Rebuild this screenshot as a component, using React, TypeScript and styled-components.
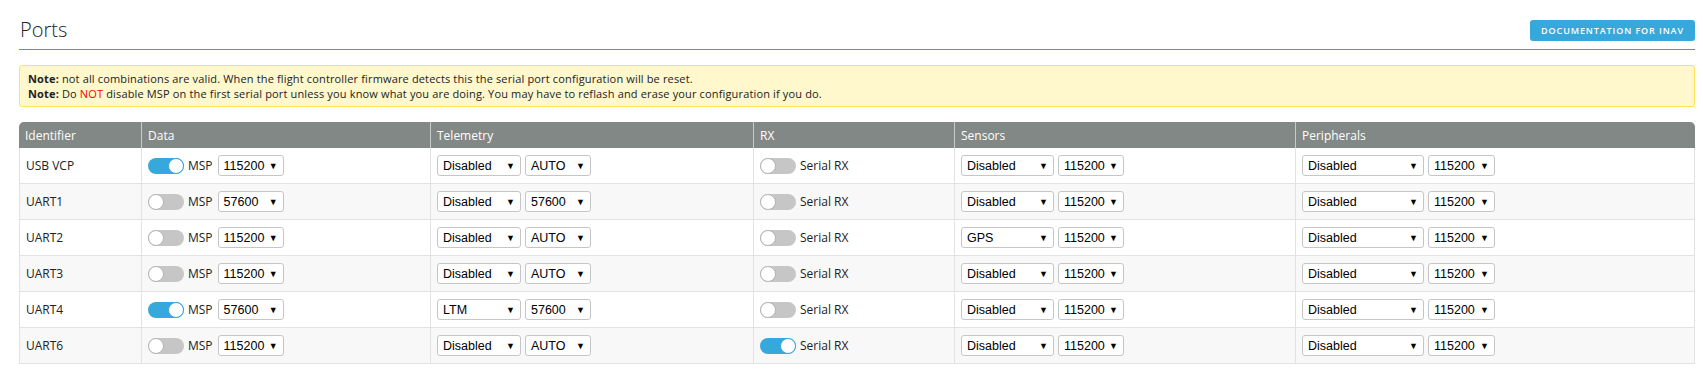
import React from 'react'
import styled, { createGlobalStyle } from 'styled-components'

const GlobalStyle = createGlobalStyle`
  body {
    margin: 0;
    background: #ffffff;
    font-family: 'Open Sans', 'Liberation Sans', sans-serif;
    color: #111111;
  }
`

type Port = {
  id: string
  msp: boolean
  mspBaud: string
  telemetry: string
  telemetryBaud: string
  serialRx: boolean
  sensors: string
  sensorsBaud: string
  peripherals: string
  peripheralsBaud: string
}

const ports: Port[] = [
  { id: 'USB VCP', msp: true, mspBaud: '115200', telemetry: 'Disabled', telemetryBaud: 'AUTO', serialRx: false, sensors: 'Disabled', sensorsBaud: '115200', peripherals: 'Disabled', peripheralsBaud: '115200' },
  { id: 'UART1', msp: false, mspBaud: '57600', telemetry: 'Disabled', telemetryBaud: '57600', serialRx: false, sensors: 'Disabled', sensorsBaud: '115200', peripherals: 'Disabled', peripheralsBaud: '115200' },
  { id: 'UART2', msp: false, mspBaud: '115200', telemetry: 'Disabled', telemetryBaud: 'AUTO', serialRx: false, sensors: 'GPS', sensorsBaud: '115200', peripherals: 'Disabled', peripheralsBaud: '115200' },
  { id: 'UART3', msp: false, mspBaud: '115200', telemetry: 'Disabled', telemetryBaud: 'AUTO', serialRx: false, sensors: 'Disabled', sensorsBaud: '115200', peripherals: 'Disabled', peripheralsBaud: '115200' },
  { id: 'UART4', msp: true, mspBaud: '57600', telemetry: 'LTM', telemetryBaud: '57600', serialRx: false, sensors: 'Disabled', sensorsBaud: '115200', peripherals: 'Disabled', peripheralsBaud: '115200' },
  { id: 'UART6', msp: false, mspBaud: '115200', telemetry: 'Disabled', telemetryBaud: 'AUTO', serialRx: true, sensors: 'Disabled', sensorsBaud: '115200', peripherals: 'Disabled', peripheralsBaud: '115200' },
]

const columns = [
  { name: 'Identifier', width: 122 },
  { name: 'Data', width: 289 },
  { name: 'Telemetry', width: 323 },
  { name: 'RX', width: 201 },
  { name: 'Sensors', width: 341 },
  { name: 'Peripherals', width: 400 },
]

const Toggle: React.FC<{ on: boolean }> = ({ on }) => (
  <StyledTrack on={on}>
    <StyledKnob on={on} />
  </StyledTrack>
)

const Select: React.FC<{ value: string; width: number }> = ({ value, width }) => (
  <StyledSelect style={{ width }}>
    <span>{value}</span>
    <StyledArrow>▼</StyledArrow>
  </StyledSelect>
)

const App: React.FC = () => {
  return (
    <StyledPage>
      <GlobalStyle />
      <StyledHeader>
        <StyledTitle>Ports</StyledTitle>
        <StyledDocButton>Documentation for INAV</StyledDocButton>
      </StyledHeader>

      <StyledNote>
        <div>
          <b>Note:</b> not all combinations are valid. When the flight controller firmware detects this the serial port configuration will be reset.
        </div>
        <div>
          <b>Note:</b> Do <StyledRed>NOT</StyledRed> disable MSP on the first serial port unless you know what you are doing. You may have to reflash and erase your configuration if you do.
        </div>
      </StyledNote>

      <StyledTable>
        <colgroup>
          {columns.map((c) => (
            <col key={c.name} style={{ width: c.width }} />
          ))}
        </colgroup>
        <thead>
          <tr>
            {columns.map((c) => (
              <StyledTh key={c.name}>{c.name}</StyledTh>
            ))}
          </tr>
        </thead>
        <tbody>
          {ports.map((p, i) => (
            <StyledRow key={p.id} striped={i % 2 === 1}>
              <StyledTd>{p.id}</StyledTd>
              <StyledTd>
                <StyledInline>
                  <Toggle on={p.msp} />
                  <StyledLabel>MSP</StyledLabel>
                  <Select value={p.mspBaud} width={66} />
                </StyledInline>
              </StyledTd>
              <StyledTd>
                <StyledInline>
                  <Select value={p.telemetry} width={84} />
                  <Select value={p.telemetryBaud} width={66} />
                </StyledInline>
              </StyledTd>
              <StyledTd>
                <StyledInline>
                  <Toggle on={p.serialRx} />
                  <StyledLabel>Serial RX</StyledLabel>
                </StyledInline>
              </StyledTd>
              <StyledTd>
                <StyledInline>
                  <Select value={p.sensors} width={93} />
                  <Select value={p.sensorsBaud} width={66} />
                </StyledInline>
              </StyledTd>
              <StyledTd>
                <StyledInline>
                  <Select value={p.peripherals} width={122} />
                  <Select value={p.peripheralsBaud} width={67} />
                </StyledInline>
              </StyledTd>
            </StyledRow>
          ))}
        </tbody>
      </StyledTable>
    </StyledPage>
  )
}

const StyledPage = styled.div`
  padding: 0 8px 19px 19px;
  width: 1676px;
`

const StyledHeader = styled.div`
  display: flex;
  justify-content: space-between;
  align-items: flex-end;
  height: 49px;
  border-bottom: 1px solid #3d9dcf;
`

const StyledTitle = styled.div`
  font-family: 'Open Sans', sans-serif;
  font-weight: 300;
  font-size: 20px;
  line-height: 20px;
  color: #222222;
  padding-left: 1px;
  margin-bottom: 9px;
`

const StyledDocButton = styled.div`
  width: 165px;
  height: 21px;
  margin-bottom: 8px;
  background: #37a8db;
  border-radius: 3px;
  color: #ffffff;
  font-size: 9px;
  font-weight: 600;
  letter-spacing: 0.9px;
  text-transform: uppercase;
  display: flex;
  align-items: center;
  justify-content: center;
`

const StyledNote = styled.div`
  margin-top: 15px;
  padding: 5px 8px;
  background: #fff8cc;
  border: 1px solid #ffe45c;
  border-radius: 3px;
  font-size: 11px;
  letter-spacing: 0.15px;
  line-height: 15px;
  color: #222222;

  b {
    font-weight: 700;
  }
`

const StyledRed = styled.span`
  color: #ff0000;
`

const StyledTable = styled.table`
  margin-top: 15px;
  width: 1676px;
  table-layout: fixed;
  border-collapse: separate;
  border-spacing: 0;
  font-size: 12px;
`

const StyledTh = styled.th`
  height: 26px;
  padding: 0 6px;
  background: #828885;
  color: #ffffff;
  font-weight: 400;
  text-align: left;
  border-left: 1px solid #c7cac8;

  &:first-child {
    border-left: none;
    border-top-left-radius: 5px;
  }
  &:last-child {
    border-top-right-radius: 5px;
  }
`

const StyledRow = styled.tr<{ striped: boolean }>`
  background: ${(props) => (props.striped ? '#f8f8f8' : '#ffffff')};
`

const StyledTd = styled.td`
  height: 35px;
  padding: 0 6px;
  border-bottom: 1px solid #e2e2e2;
  border-left: 1px solid #e2e2e2;
  color: #222222;

  &:last-child {
    border-right: 1px solid #e2e2e2;
  }
`

const StyledInline = styled.div`
  display: flex;
  align-items: center;
`

const StyledTrack = styled.span<{ on: boolean }>`
  display: inline-flex;
  width: 36px;
  height: 16px;
  border-radius: 8px;
  background: ${(props) => (props.on ? '#37a8db' : '#c6c6c6')};
  justify-content: ${(props) => (props.on ? 'flex-end' : 'flex-start')};
  flex-shrink: 0;
`

const StyledKnob = styled.span<{ on: boolean }>`
  width: 14px;
  height: 14px;
  border-radius: 50%;
  background: #ffffff;
  border: 1px solid ${(props) => (props.on ? '#37a8db' : '#b5b5b5')};
`

const StyledLabel = styled.span`
  margin-left: 4px;
  margin-right: 5px;
`

const StyledSelect = styled.span`
  display: inline-flex;
  align-items: center;
  justify-content: space-between;
  box-sizing: border-box;
  height: 21px;
  margin-right: 4px;
  padding: 0 5px 0 5px;
  background: #ffffff;
  border: 1px solid #c6c6c6;
  border-radius: 3px;
  color: #000000;
  font-family: 'Liberation Sans', 'Open Sans', sans-serif;
  font-size: 12.5px;
  flex-shrink: 0;
`

const StyledArrow = styled.span`
  font-size: 9px;
  color: #000000;
`

export default App
